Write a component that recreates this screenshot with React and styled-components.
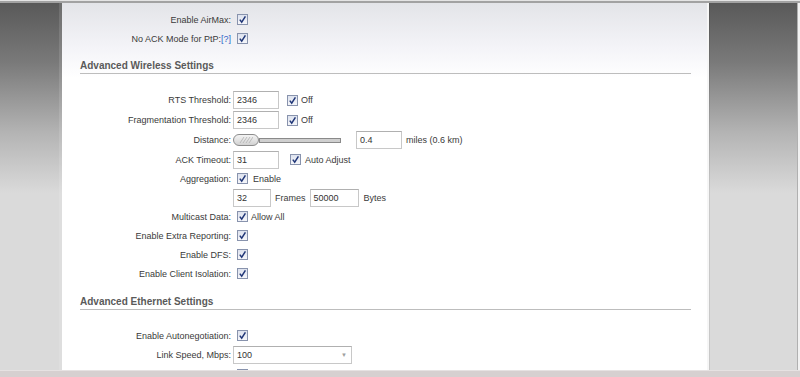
import React from 'react';
import styled, {createGlobalStyle} from 'styled-components';

const Global = createGlobalStyle`
  html, body {
    margin: 0;
    padding: 0;
    overflow: hidden;
    background: #dadada;
  }
  body {
    font-family: "Liberation Sans", Arial, sans-serif;
    font-size: 9px;
    color: #3a3a3a;
  }
`;

const Screen = styled.div`
  width: 800px;
  height: 377px;
  display: flex;
  flex-direction: column;
  overflow: hidden;
`;

const TopEdge = styled.div`
  height: 1px;
  border-bottom: 2px solid #a2a2a2;
  background: #e4e4e4;
  flex: none;
`;

const Viewport = styled.div`
  flex: 1;
  display: flex;
  min-height: 0;
  overflow: hidden;
`;

const Gutter = styled.div`
  flex: none;
  width: ${p => p.$w}px;
  background: linear-gradient(#595959 0, #7a7a7a 60px, #b4b4b4 130px, #dadada 190px, #dadada 100%);
  box-shadow: ${p => (p.$side === 'left' ? 'inset -3px 0 0 rgba(255,255,255,0.12)' : 'inset 1px 0 0 rgba(0,0,0,0.08)')};
`;

const ScrollEdge = styled.div`
  flex: none;
  width: 3px;
  background: #f2f2f2;
  border-left: 1px solid #b0b0b0;
  box-sizing: border-box;
`;

const Panel = styled.div`
  flex: none;
  width: 647px;
  box-sizing: border-box;
  background: linear-gradient(#e3e4e8 0, #f4f4f8 45px, #ffffff 75px);
  border-right: 2px solid #f6f6f6;
  padding-top: 7px;
`;

const Row = styled.div`
  display: flex;
  align-items: center;
  height: ${p => (p.$tall ? 20 : 19)}px;
`;

const Label = styled.div`
  width: 169px;
  flex: none;
  text-align: right;
  white-space: nowrap;
`;

const Controls = styled.div`
  display: flex;
  align-items: center;
  padding-left: 2px;
  white-space: nowrap;
`;

const Help = styled.span`
  color: #2f63c8;
`;

const Heading = styled.div`
  margin: ${p => p.$top}px 16px 16px 18px;
  font-size: 10px;
  font-weight: bold;
  color: #5a5a5a;
  line-height: 14px;
  padding-bottom: 0;
  border-bottom: 1px solid #bdbdbd;
`;

const Box = styled.span`
  display: inline-flex;
  align-items: center;
  justify-content: center;
  box-sizing: border-box;
  width: 11px;
  height: 11px;
  border: 1px solid #8893ad;
  background: linear-gradient(#dde2ee, #f5f6fa);
  margin-left: ${p => p.$ml}px;
  margin-right: ${p => p.$mr}px;
  flex: none;
`;

const Check = ({ml = 4, mr = 4}) => (
  <Box $ml={ml} $mr={mr}>
    <svg width="9" height="9" viewBox="0 0 9 9">
      <path d="M1.8 4.6 L3.7 7.2 L7.4 1.4" fill="none" stroke="#203677" strokeWidth="1.5" />
    </svg>
  </Box>
);

const Field = styled.div`
  box-sizing: border-box;
  width: ${p => p.$w}px;
  height: 18px;
  border: 1px solid #c8c8c8;
  border-top-color: #b0b0b0;
  background: #fff;
  padding: 0 3px;
  line-height: 16px;
  margin-left: ${p => p.$ml || 0}px;
  margin-right: ${p => p.$mr || 0}px;
  flex: none;
  color: #333;
`;

const Text = styled.span`
  margin-left: ${p => p.$ml || 0}px;
`;

const Slider = styled.div`
  width: 108px;
  height: 14px;
  display: flex;
  align-items: center;
  flex: none;
`;

const Thumb = styled.div`
  width: 26px;
  height: 12px;
  box-sizing: border-box;
  border: 1px solid #8c8c8c;
  border-radius: 6px;
  background: linear-gradient(#f4f4f4, #d2d2d2);
  display: flex;
  align-items: center;
  justify-content: center;
  flex: none;
`;

const Track = styled.div`
  flex: 1;
  height: 3px;
  border: 1px solid #8a8a8a;
  background: #cfcfcf;
`;

const Select = styled.div`
  box-sizing: border-box;
  width: 119px;
  height: 18px;
  border: 1px solid #c8c8c8;
  border-top-color: #b0b0b0;
  background: #fff;
  display: flex;
  align-items: center;
  justify-content: space-between;
  padding: 0 4px 0 3px;
  color: #333;
`;

const Arrow = styled.span`
  font-size: 6px;
  color: #a0a0a0;
`;

const StatusBar = styled.div`
  flex: none;
  height: 7px;
  background: #d6d0d0;
  border-top: 1px solid #e6e2e2;
  box-sizing: border-box;
`;

const Hatch = () => (
  <svg width="14" height="8" viewBox="0 0 14 8">
    {[1, 4, 7, 10].map(x => (
      <line key={x} x1={x} y1="7" x2={x + 4} y2="1" stroke="#b0b0b0" strokeWidth="0.8" />
    ))}
  </svg>
);

export default function App() {
  return (
    <Screen>
      <Global />
      <TopEdge />
      <Viewport>
        <Gutter $w={62} $side="left" />
        <Panel>
          <Row>
            <Label>Enable AirMax:</Label>
            <Controls><Check /></Controls>
          </Row>
          <Row>
            <Label>No ACK Mode for PtP:<Help>[?]</Help></Label>
            <Controls><Check /></Controls>
          </Row>

          <Heading $top={11}>Advanced Wireless Settings</Heading>

          <Row $tall>
            <Label>RTS Threshold:</Label>
            <Controls>
              <Field $w={46}>2346</Field>
              <Check ml={8} mr={3} />
              <Text>Off</Text>
            </Controls>
          </Row>
          <Row $tall>
            <Label>Fragmentation Threshold:</Label>
            <Controls>
              <Field $w={46}>2346</Field>
              <Check ml={8} mr={3} />
              <Text>Off</Text>
            </Controls>
          </Row>
          <Row $tall>
            <Label>Distance:</Label>
            <Controls>
              <Slider>
                <Thumb><Hatch /></Thumb>
                <Track />
              </Slider>
              <Field $w={46} $ml={15} $mr={4}>0.4</Field>
              <Text>miles (0.6 km)</Text>
            </Controls>
          </Row>
          <Row>
            <Label>ACK Timeout:</Label>
            <Controls>
              <Field $w={46}>31</Field>
              <Check ml={11} mr={4} />
              <Text>Auto Adjust</Text>
            </Controls>
          </Row>
          <Row>
            <Label>Aggregation:</Label>
            <Controls>
              <Check ml={4} mr={5} />
              <Text>Enable</Text>
            </Controls>
          </Row>
          <Row>
            <Label />
            <Controls>
              <Field $w={38} $mr={4}>32</Field>
              <Text>Frames</Text>
              <Field $w={49} $ml={4} $mr={5}>50000</Field>
              <Text>Bytes</Text>
            </Controls>
          </Row>
          <Row>
            <Label>Multicast Data:</Label>
            <Controls>
              <Check ml={4} mr={3} />
              <Text>Allow All</Text>
            </Controls>
          </Row>
          <Row>
            <Label>Enable Extra Reporting:</Label>
            <Controls><Check /></Controls>
          </Row>
          <Row>
            <Label>Enable DFS:</Label>
            <Controls><Check /></Controls>
          </Row>
          <Row>
            <Label>Enable Client Isolation:</Label>
            <Controls><Check /></Controls>
          </Row>

          <Heading $top={12}>Advanced Ethernet Settings</Heading>

          <Row>
            <Label>Enable Autonegotiation:</Label>
            <Controls><Check /></Controls>
          </Row>
          <Row $tall>
            <Label>Link Speed, Mbps:</Label>
            <Controls>
              <Select>
                <span>100</span>
                <Arrow>▼</Arrow>
              </Select>
            </Controls>
          </Row>
          <Row>
            <Label>Enable Full Duplex:</Label>
            <Controls><Check /></Controls>
          </Row>
        </Panel>
        <Gutter $w={88} $side="right" />
        <ScrollEdge />
      </Viewport>
      <StatusBar />
    </Screen>
  );
}
